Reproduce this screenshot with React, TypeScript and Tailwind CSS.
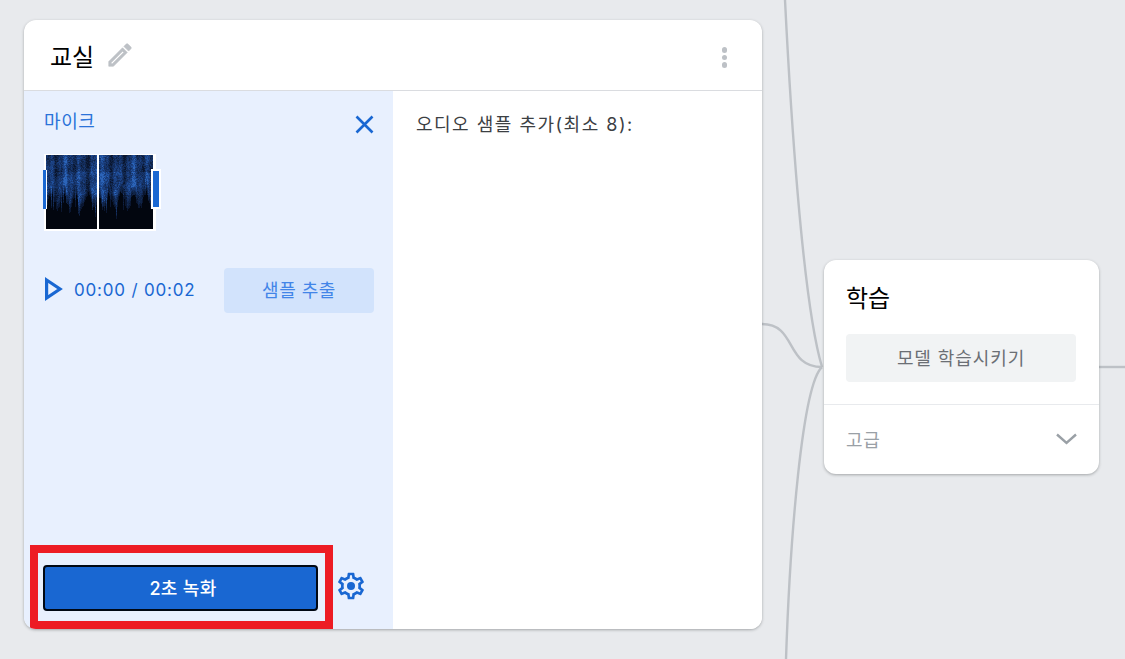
import React from "react";

const FONT = "font-['Inter','Noto_Sans_CJK_KR','Noto_Sans',sans-serif]";

function rng(seed: number) {
  let s = seed;
  return () => {
    s = (s * 16807) % 2147483647;
    return s / 2147483647;
  };
}

function Spectro({ width, height, seed }: { width: number; height: number; seed: number }) {
  const r = rng(seed);
  const rects: React.ReactElement[] = [];
  const palette = ["#0a1630", "#0f2346", "#132c5a", "#17366e", "#1b4182", "#20509c", "#2c64b8"];
  const rand = [r() * 6, r() * 6, r() * 6];
  for (let x = 0; x < width; x++) {
    rects.push(<rect key={`b${x}`} x={x} y={0} width={1} height={height} fill="#02060f" />);
    const streak =
      0.43 +
      0.18 * Math.sin(x * 0.42 + rand[0]) +
      0.12 * Math.sin(x * 0.97 + rand[1]) +
      0.08 * Math.sin(x * 0.19 + rand[2]);
    const spike = Math.sin(x * 0.52 + rand[1]);
    const floor = height * (0.62 + 0.11 * spike + 0.09 * (r() - 0.5)) + (r() < 0.12 ? 12 : 0);
    for (let y = 0; y < floor; y++) {
      const fade = y > floor - 10 ? Math.max(0.2, (floor - y) / 11) : 1;
      const band = 0.08 * Math.sin(y * 0.3 + x * 0.12 + rand[2]) + (y > 16 && y < 40 ? 0.12 : 0);
      const level = (streak + band + (r() - 0.5) * 0.36) * fade;
      const idx = Math.max(0, Math.min(palette.length - 1, Math.floor(level * palette.length)));
      rects.push(<rect key={`${x}-${y}`} x={x} y={y} width={1} height={1} fill={palette[idx]} />);
    }
  }
  return (
    <svg width={width} height={height} viewBox={`0 0 ${width} ${height}`} shapeRendering="crispEdges" className="block">
      {rects}
    </svg>
  );
}

function Pencil() {
  return (
    <svg width="30" height="30" viewBox="0 0 24 24" fill="#bdc1c6" stroke="#bdc1c6" strokeWidth="0.5">
      <path d="M14.06 9.02l.92.92L5.92 19H5v-.92l9.06-9.06M17.66 3c-.25 0-.51.1-.7.29l-1.83 1.83 3.75 3.75 1.83-1.83c.39-.39.39-1.02 0-1.41l-2.34-2.34c-.2-.2-.45-.29-.71-.29zm-3.6 3.19L3 17.25V21h3.75L17.81 9.94l-3.75-3.75z" />
    </svg>
  );
}

function Gear() {
  return (
    <svg width="32" height="32" viewBox="0 0 24 24" fill="#1967d2">
      <path d="M19.43 12.98c.04-.32.07-.64.07-.98 0-.34-.03-.66-.07-.98l2.11-1.65c.19-.15.24-.42.12-.64l-2-3.46c-.09-.16-.26-.25-.44-.25-.06 0-.12.01-.17.03l-2.49 1c-.52-.4-1.08-.73-1.69-.98l-.38-2.65C14.46 2.18 14.25 2 14 2h-4c-.25 0-.46.18-.49.42l-.38 2.65c-.61.25-1.17.59-1.69.98l-2.49-1c-.06-.02-.12-.03-.18-.03-.17 0-.34.09-.43.25l-2 3.46c-.13.22-.07.49.12.64l2.11 1.65c-.04.32-.07.65-.07.98 0 .33.03.66.07.98l-2.11 1.65c-.19.15-.24.42-.12.64l2 3.46c.09.16.26.25.44.25.06 0 .12-.01.17-.03l2.49-1c.52.4 1.08.73 1.69.98l.38 2.65c.03.24.24.42.49.42h4c.25 0 .46-.18.49-.42l.38-2.65c.61-.25 1.17-.59 1.69-.98l2.49 1c.06.02.12.03.18.03.17 0 .34-.09.43-.25l2-3.46c.12-.22.07-.49-.12-.64l-2.11-1.65zm-1.98-1.71c.04.31.05.52.05.73 0 .21-.02.43-.05.73l-.14 1.13.89.7 1.08.84-.7 1.21-1.27-.51-1.04-.42-.9.68c-.43.32-.84.56-1.25.73l-1.06.43-.16 1.13-.2 1.35h-1.4l-.19-1.35-.16-1.13-1.06-.43c-.43-.18-.83-.41-1.23-.71l-.91-.7-1.06.43-1.27.51-.7-1.21 1.08-.84.89-.7-.14-1.13c-.03-.31-.05-.54-.05-.74s.02-.43.05-.73l.14-1.13-.89-.7-1.08-.84.7-1.21 1.27.51 1.04.42.9-.68c.43-.32.84-.56 1.25-.73l1.06-.43.16-1.13.2-1.35h1.39l.19 1.35.16 1.13 1.06.43c.43.18.83.41 1.23.71l.91.7 1.06-.43 1.27-.51.7 1.21-1.07.85-.89.7.14 1.13z" />
      <circle cx="12" cy="12" r="3" />
    </svg>
  );
}

function Wires() {
  return (
    <svg width="1125" height="659" viewBox="0 0 1125 659" fill="none" stroke="#bdc1c6" strokeWidth="2.4" className="absolute left-0 top-0">
      <path d="M785 0 C790 100 802 300 822 367" />
      <path d="M822 367 C802 385 790 540 786 659" />
      <path d="M762 324 C797 324 785 367 822 367" />
      <path d="M1099 367 L1125 367" />
    </svg>
  );
}

export default function App() {
  return (
    <div className={`relative h-[659px] w-[1125px] overflow-hidden bg-[#e8eaed] ${FONT}`}>
      <Wires />

      {/* class node */}
      <div className="absolute left-[24px] top-[20px] flex h-[609px] w-[738px] flex-col overflow-hidden rounded-[12px] bg-white shadow-[0_1px_3px_rgba(60,64,67,0.4)]">
        <div className="flex h-[71px] shrink-0 items-center justify-between border-b border-[#dadce0] pl-[26px] pr-[35px] pt-[5px]">
          <div className="flex items-center gap-[11px]">
            <span className="text-[24px] leading-none text-[#000000]">교실</span>
            <span className="-mt-[5px]"><Pencil /></span>
          </div>
          <div className="flex flex-col gap-[2px]">
            <span className="h-[5.5px] w-[5.5px] rounded-full bg-[#bdc1c6]" />
            <span className="h-[5.5px] w-[5.5px] rounded-full bg-[#bdc1c6]" />
            <span className="h-[5.5px] w-[5.5px] rounded-full bg-[#bdc1c6]" />
          </div>
        </div>

        <div className="flex min-h-0 flex-1">
          {/* mic panel */}
          <div className="flex w-[369px] shrink-0 flex-col bg-[#e8f0fe]">
            <div className="flex items-start justify-between pl-[20px] pr-[19px] pt-[20px]">
              <span className="text-[18px] leading-[22px] tracking-[0.6px] text-[#2a73d9]">마이크</span>
              <svg width="19" height="19" viewBox="0 0 19 19" className="mt-[4px]" stroke="#1967d2" strokeWidth="2.6" fill="none">
                <path d="M1.5 1.5 L17.5 17.5 M17.5 1.5 L1.5 17.5" />
              </svg>
            </div>

            <div className="relative ml-[20px] mt-[20px] flex h-[77px] w-[112px] gap-[2px] bg-white pb-[2px] pl-[2px] pr-[3px] pt-[1px]">
              <Spectro width={51} height={74} seed={71} />
              <Spectro width={54} height={74} seed={433} />
              <span className="absolute left-[-1px] top-[16px] h-[39px] w-[4px] border-r border-white bg-[#1967d2]" />
              <span className="absolute right-[-5px] top-[15px] h-[40px] w-[10px] border-2 border-white bg-[#1967d2]" />
            </div>

            <div className="mt-[37px] flex items-center pl-[21px]">
              <svg width="18" height="24" viewBox="0 0 18 24" fill="none" stroke="#1967d2" strokeWidth="3.2" className="-mt-[4px]">
                <path d="M1.6 3 L15 12 L1.6 21 Z" />
              </svg>
              <span className="-mt-[1px] ml-[11px] w-[150px] whitespace-nowrap text-[17px] leading-none tracking-[0.8px] text-[#1967d2]">00:00 / 00:02</span>
              <span className="flex h-[45px] w-[150px] items-center justify-center rounded-[4px] bg-[#d2e3fc] text-[18px] tracking-[0.5px] text-[#4285e8]">샘플 추출</span>
            </div>

            <div className="mt-auto flex items-center">
              <div className="ml-[6px] flex h-[84px] w-[303px] items-center border-[8px] border-[#ed1c24] pl-[5px]">
                <button className="mt-[2px] flex h-[46px] w-[275px] items-center justify-center rounded-[4px] border-2 border-[#000814] bg-[#1967d2] pl-[5px] text-[18px] font-medium tracking-[0.3px] text-white">
                  2초 녹화
                </button>
              </div>
              <span className="mb-[2px] ml-[2px]"><Gear /></span>
            </div>
          </div>

          {/* samples */}
          <div className="flex-1 bg-white pl-[23px] pt-[22px] text-[18px] leading-[24px] tracking-[1.5px] text-[#3c4043]">
            오디오 샘플 추가(최소 8):
          </div>
        </div>
      </div>

      {/* training node */}
      <div className="absolute left-[824px] top-[260px] flex h-[214px] w-[275px] flex-col rounded-[12px] bg-white shadow-[0_1px_3px_rgba(60,64,67,0.4)]">
        <div className="flex h-[145px] shrink-0 flex-col border-b border-[#e8eaed] pb-0 pl-[22px] pr-[23px] pt-[24px]">
          <span className="text-[24px] leading-[30px] text-[#000000]">학습</span>
          <span className="mt-[20px] flex h-[48px] items-center justify-center rounded-[4px] bg-[#f1f3f4] text-[18px] tracking-[0.9px] text-[#6b6f74]">모델 학습시키기</span>
        </div>
        <div className="flex flex-1 items-center justify-between pl-[22px] pr-[22px] pt-[1px]">
          <span className="text-[18px] tracking-[0.8px] text-[#9aa0a6]">고급</span>
          <svg width="21" height="12" viewBox="0 0 21 12" fill="none" stroke="#9aa0a6" strokeWidth="2.4" className="mb-[2px]">
            <path d="M1 1.5 L10.5 10 L20 1.5" />
          </svg>
        </div>
      </div>
    </div>
  );
}
